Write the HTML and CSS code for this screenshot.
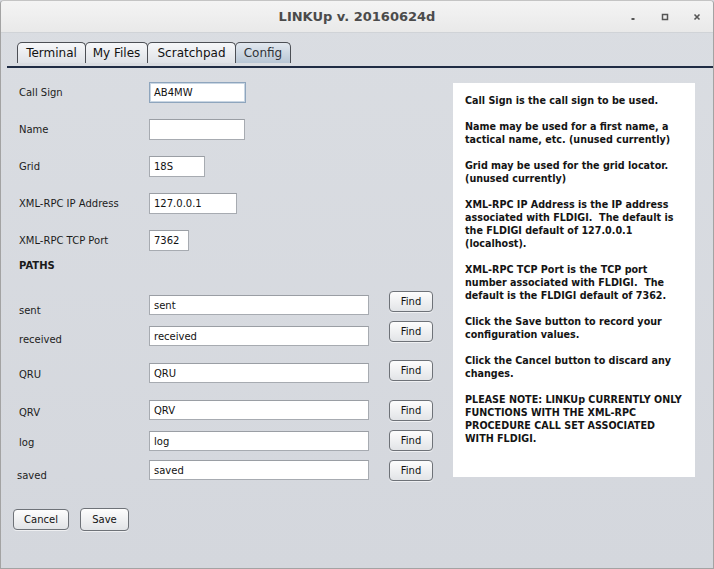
FILE: index.html
```html
<!DOCTYPE html>
<html>
<head>
<meta charset="utf-8">
<title>LINKUp</title>
<link rel="stylesheet" href="styles.css">
</head>
<body>
<div class="window">
  <div class="titlebar">
    <div></div>
    <div class="title">LINKUp v. 20160624d</div>
    <div class="controls">
      <svg class="ctl" width="8" height="8" viewBox="0 0 8 8"><rect x="2.5" y="5" width="3" height="2" fill="#555"/></svg>
      <svg class="ctl" width="8" height="8" viewBox="0 0 8 8"><rect x="1.5" y="1.5" width="5" height="5" fill="none" stroke="#555" stroke-width="1.5"/></svg>
      <svg class="ctl" width="8" height="8" viewBox="0 0 8 8"><path d="M1.5 1.5 L6.5 6.5 M6.5 1.5 L1.5 6.5" stroke="#555" stroke-width="1.6"/></svg>
    </div>
  </div>
  <div class="tabs">
    <div class="tab t-term">Terminal</div>
    <div class="tab t-files">My Files</div>
    <div class="tab t-scratch">Scratchpad</div>
    <div class="tab t-config active">Config</div>
  </div>
  <div class="sep"></div>
  <div class="main">
    <div class="form">
      <div class="field"><span class="lbl">Call Sign</span><div class="tf focus w-call">AB4MW</div></div>
      <div class="field"><span class="lbl">Name</span><div class="tf w-name"></div></div>
      <div class="field"><span class="lbl">Grid</span><div class="tf w-grid">18S</div></div>
      <div class="field"><span class="lbl">XML-RPC IP Address</span><div class="tf w-ip">127.0.0.1</div></div>
      <div class="field"><span class="lbl">XML-RPC TCP Port</span><div class="tf w-port">7362</div></div>
      <div class="paths">PATHS</div>
      <div class="prow r-sent"><span class="lbl">sent</span><div class="tf path">sent</div><div class="btn find">Find</div></div>
      <div class="prow r-recv"><span class="lbl">received</span><div class="tf path">received</div><div class="btn find">Find</div></div>
      <div class="prow r-qru"><span class="lbl">QRU</span><div class="tf path">QRU</div><div class="btn find">Find</div></div>
      <div class="prow r-qrv"><span class="lbl">QRV</span><div class="tf path">QRV</div><div class="btn find">Find</div></div>
      <div class="prow r-log"><span class="lbl">log</span><div class="tf path">log</div><div class="btn find">Find</div></div>
      <div class="prow r-saved"><span class="lbl">saved</span><div class="tf path">saved</div><div class="btn find">Find</div></div>
    </div>
    <div class="info">
      <p>Call Sign is the call sign to be used.</p>
      <p>Name may be used for a first name, a<br>tactical name, etc. (unused currently)</p>
      <p>Grid may be used for the grid locator.<br>(unused currently)</p>
      <p>XML-RPC IP Address is the IP address<br>associated with FLDIGI.&nbsp; The default is<br>the FLDIGI default of 127.0.0.1<br>(localhost).</p>
      <p>XML-RPC TCP Port is the TCP port<br>number associated with FLDIGI.&nbsp; The<br>default is the FLDIGI default of 7362.</p>
      <p>Click the Save button to record your<br>configuration values.</p>
      <p>Click the Cancel button to discard any<br>changes.</p>
      <p>PLEASE NOTE: LINKUp CURRENTLY ONLY<br>FUNCTIONS WITH THE XML-RPC<br>PROCEDURE CALL SET ASSOCIATED<br>WITH FLDIGI.</p>
    </div>
  </div>
  <div class="footer">
    <div class="btn cancel">Cancel</div>
    <div class="btn save">Save</div>
  </div>
</div>
</body>
</html>
```

FILE: styles.css
```css
* { box-sizing: border-box; }
html, body { margin: 0; padding: 0; background: #d6d9df; }
body { font-family: "DejaVu Sans", "Liberation Sans", sans-serif; color: #1a1a1a; }

.window {
  width: 714px;
  height: 569px;
  border: 1px solid #a3a3a3;
  border-top-color: #c4c4c4;
  border-radius: 4px 4px 0 0;
  background: linear-gradient(#dadde2, #d4d7dd);
  display: flex;
  flex-direction: column;
  overflow: hidden;
}

.titlebar {
  height: 32px;
  flex: none;
  background: linear-gradient(#f4f4f4, #e9e9e9);
  border-bottom: 1px solid #d0d3d7;
  display: grid;
  grid-template-columns: 1fr auto 1fr;
  align-items: center;
}
.title {
  font-size: 13px;
  font-weight: bold;
  color: #4b4b4b;
  padding-bottom: 1px;
}
.controls {
  display: flex;
  justify-content: flex-end;
  align-items: center;
  padding-right: 12px;
  gap: 24px;
}
.ctl { display: block; }

.tabs {
  flex: none;
  display: flex;
  padding: 9px 0 0 16px;
  height: 30px;
}
.tab {
  height: 21px;
  font-size: 12px;
  color: #111;
  display: flex;
  align-items: center;
  justify-content: center;
  border: 1px solid #4c4f55;
  border-bottom: none;
  border-radius: 5px 5px 0 0;
  background: linear-gradient(#f6f7f9, #dfe2e7);
  margin-right: -1px;
}
.t-term { width: 69px; }
.t-files { width: 63px; }
.t-scratch { width: 89px; }
.t-config { width: 56px; }
.tab.active {
  background: linear-gradient(#e2e8ef, #b8c6d5);
  color: #2f3338;
}

.sep {
  flex: none;
  margin: 3px 0 0 6px;
  height: 2px;
  background: #1f2c44;
}

.main {
  display: flex;
  align-items: flex-start;
  padding-left: 18px;
}
.form {
  width: 434px;
  padding-top: 14px;
}
.field {
  display: flex;
  align-items: center;
  height: 21px;
  margin-bottom: 16px;
}
.field:nth-child(5) { margin-bottom: 0; }
.lbl {
  width: 130px;
  flex: none;
  font-size: 10px;
  line-height: 12px;
  color: #1c1c1c;
}
.tf {
  height: 21px;
  background: #fff;
  border: 1px solid #a7abb1;
  border-top-color: #9a9ea4;
  font-size: 10px;
  color: #111;
  padding-left: 4px;
  display: flex;
  align-items: center;
}
.tf.focus {
  border-color: #8ea5bd;
  box-shadow: inset 0 0 0 1px #c9d6e3;
}
.w-call { width: 97px; }
.w-name { width: 96px; }
.w-grid { width: 56px; }
.w-ip { width: 88px; }
.w-port { width: 40px; }

.paths {
  margin-top: 9px;
  font-size: 10px;
  line-height: 12px;
  font-weight: bold;
  color: #1a1a1a;
}

.prow {
  display: flex;
  align-items: flex-start;
}
.tf.path { width: 220px; height: 20px; flex: none; }
.find { margin-left: 20px; width: 44px; height: 21px; flex: none; }

.r-sent { margin-top: 19px; height: 30px; }
.r-sent .lbl { margin-top: 14px; }
.r-sent .tf { margin-top: 4px; }
.r-recv { height: 39px; }
.r-recv .lbl { margin-top: 13px; }
.r-recv .tf { margin-top: 5px; }
.r-qru { height: 40px; }
.r-qru .lbl { margin-top: 9px; }
.r-qru .tf { margin-top: 3px; }
.r-qrv { height: 30px; }
.r-qrv .lbl { margin-top: 7px; }
.r-log { height: 30px; }
.r-log .lbl { margin-top: 7px; }
.r-log .tf { margin-top: 1px; }
.r-saved { height: 21px; }
.r-saved .lbl { margin-top: 10px; margin-left: -2px; width: 132px; }

.btn {
  border: 1px solid #6e7278;
  border-radius: 4px;
  background: linear-gradient(#fdfdfd, #e2e4e7);
  box-shadow: 0 1px 0 rgba(255,255,255,0.6);
  font-size: 10px;
  color: #111;
  display: flex;
  align-items: center;
  justify-content: center;
}

.info {
  margin-top: 15px;
  width: 242px;
  height: 394px;
  background: #fff;
  padding: 11px 0 0 12px;
  font-size: 9.6px;
  font-weight: bold;
  line-height: 13px;
  color: #141414;
  white-space: nowrap;
}
.info p { margin: 0 0 13px 0; }

.footer {
  display: flex;
  align-items: flex-start;
  padding: 27px 0 0 12px;
}
.cancel { width: 56px; height: 21px; margin-top: 1px; }
.save { width: 49px; height: 23px; margin-left: 11px; }
```
